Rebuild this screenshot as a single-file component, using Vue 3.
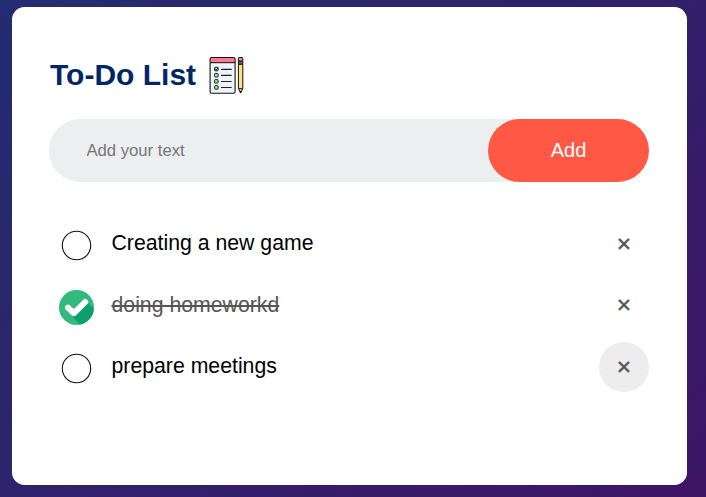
<script setup>
import { ref } from 'vue'

const draft = ref('')
const tasks = ref([
  { id: 1, text: 'Creating a new game', done: false, active: false },
  { id: 2, text: 'doing homeworkd', done: true, active: false },
  { id: 3, text: 'prepare meetings', done: false, active: true },
])
let nextId = 4

function addTask() {
  const text = draft.value.trim()
  if (!text) return
  tasks.value.push({ id: nextId++, text, done: false, active: false })
  draft.value = ''
}

function removeTask(id) {
  tasks.value = tasks.value.filter((t) => t.id !== id)
}
</script>

<template>
  <div class="page">
    <main class="card">
      <h2 class="title">
        <span>To-Do List</span>
        <svg class="notepad" width="36" height="38" viewBox="0 0 36 38">
          <rect x="1.1" y="1.5" width="25" height="35.8" rx="1.6" fill="#edf3ff" />
          <path d="M1.1 7V3Q1.1 1.5 2.6 1.5H24.6Q26.1 1.5 26.1 3V7Z" fill="#ff7c8b" />
          <path d="M1.1 6.7H26.1" stroke="#111" stroke-width="1" />
          <rect x="1.1" y="1.5" width="25" height="35.8" rx="1.6" fill="none" stroke="#111" stroke-width="1.1" />
          <g fill="#a5ed83" stroke="#182018" stroke-width="1">
            <rect x="5.6" y="11.3" width="3.5" height="3.5" rx=".6" />
            <rect x="5.6" y="17.5" width="3.5" height="3.5" rx=".6" />
            <rect x="5.6" y="23.6" width="3.5" height="3.5" rx=".6" />
            <rect x="5.6" y="29.7" width="3.5" height="3.5" rx=".6" />
          </g>
          <path d="M6 12.6l1.3 1.5 2-2.6" fill="none" stroke="#182018" stroke-width="1" />
          <path d="M12 13.4H22.7M12 19.4H22.7M12 25.5H22.7M12 31.5H22.7" stroke="#222" stroke-width="1.1" />
          <path d="M29.5 8H33.7V32.5H29.5Z" fill="#ffe07d" />
          <path d="M29.5 1.5H33.7V5H29.5Z" fill="#ff7c8b" />
          <path d="M29.5 5H33.7V8.3H29.5Z" fill="#5d5f68" />
          <path d="M29.5 32.5H33.7L31.6 37Z" fill="#f6d0b0" />
          <path d="M29.4 2.2Q29.4 1.5 30.1 1.5H33.1Q33.8 1.5 33.8 2.2V32.5L31.6 37L29.4 32.5ZM29.4 5H33.8M29.4 8.3H33.8M29.4 32.7H33.8" fill="none" stroke="#111" stroke-width="1" stroke-linejoin="round" />
          <path d="M30.6 35h2l-1 2.5z" fill="#111" />
        </svg>
      </h2>

      <form class="row" @submit.prevent="addTask">
        <input v-model="draft" class="field" type="text" placeholder="Add your text" />
        <button class="add" type="submit">Add</button>
      </form>

      <ul class="list">
        <li v-for="task in tasks" :key="task.id" class="item" :class="{ done: task.done }" @click="task.done = !task.done">
          <svg v-if="task.done" class="mark" width="35" height="35" viewBox="0 0 35 35">
            <circle cx="17.5" cy="17.5" r="17.5" fill="#33b97c" />
            <path d="M28.6 12.5L34.9 18.8A17.5 17.5 0 0 1 21 34.6L13 26Z" fill="#0ba06e" />
            <path d="M9 17.6L15 23.2L26.2 12" fill="none" stroke="#fff" stroke-width="6" stroke-linecap="round" stroke-linejoin="round" />
          </svg>
          <svg v-else class="mark" width="35" height="35" viewBox="0 0 35 35">
            <circle cx="17.5" cy="17.5" r="14.2" fill="#fff" stroke="#111" stroke-width="1.1" />
          </svg>
          <span class="label">{{ task.text }}</span>
          <button class="remove" :class="{ active: task.active }" type="button" @click.stop="removeTask(task.id)">×</button>
        </li>
      </ul>
    </main>
  </div>
</template>

<style>
body {
  margin: 0;
}
</style>

<style scoped>
.page,
.page * {
  box-sizing: border-box;
  font-family: 'Liberation Sans', Arial, sans-serif;
}
.page {
  height: 497px;
  padding: 7px 19px 12px 12px;
  background: linear-gradient(135deg, #232d71, #3e1466);
}
.card {
  height: 478px;
  padding: 49px 38px 0 37px;
  border-radius: 12.5px;
  background: #fff;
}
.title {
  display: flex;
  align-items: center;
  height: 38px;
  margin: 0 0 25px;
  padding-left: 1px;
  color: #002765;
  font-size: 30px;
  line-height: 36px;
}
.notepad {
  margin-left: 13px;
}
.row {
  display: flex;
  height: 63px;
  margin: 0 0 31px;
  border-radius: 32px;
  background: #edeef0;
}
.field {
  flex: 1;
  min-width: 0;
  padding: 0 0 0 37.5px;
  border: none;
  outline: none;
  background: transparent;
  color: #222;
  font-size: 16.67px;
}
.field::placeholder {
  color: #757575;
}
.add {
  width: 161px;
  padding: 0;
  border: none;
  border-radius: 32px;
  background: #ff5945;
  color: #fff;
  font-size: 20px;
}
.list {
  margin: 0;
  padding: 0;
  list-style: none;
}
.item {
  display: flex;
  align-items: center;
  height: 61.5px;
  padding-left: 10px;
  color: #000;
  font-size: 21.25px;
}
.mark {
  flex: none;
  margin-top: 3px;
}
.done .mark {
  margin-top: 4.5px;
}
.label {
  flex: 1;
  padding-left: 17.5px;
}
.done .label {
  color: #555;
  text-decoration: line-through;
}
.remove {
  width: 50px;
  height: 50px;
  padding: 0;
  border: none;
  border-radius: 50%;
  background: transparent;
  color: #555;
  font-size: 24.5px;
  line-height: 50px;
  -webkit-text-stroke: 0.5px #555;
}
.remove.active {
  background: #ededed;
}
</style>
